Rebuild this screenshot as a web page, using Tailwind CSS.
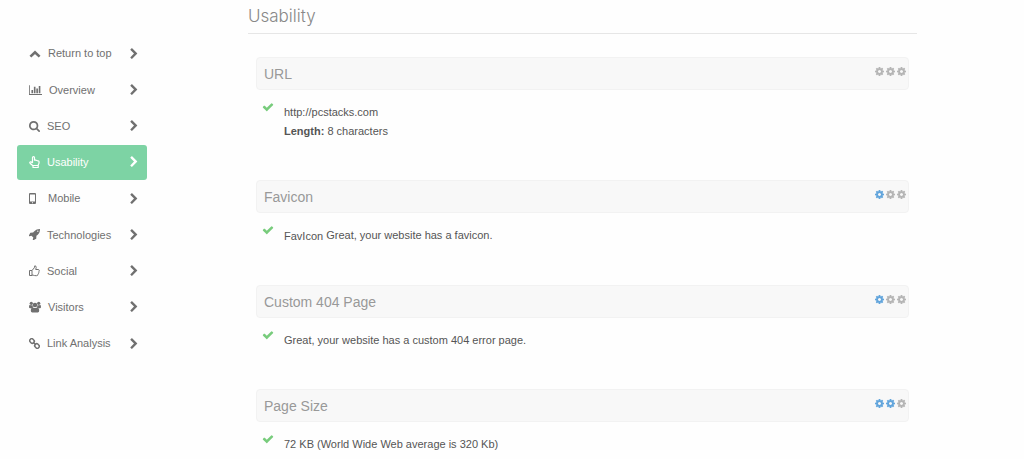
<!DOCTYPE html>
<html lang="en">
<head>
  <meta charset="utf-8"/>
  <meta content="width=device-width, initial-scale=1.0" name="viewport"/>
  <title>Website Review - Usability</title>
  <script src="https://cdn.jsdelivr.net/npm/@tailwindcss/browser@4"></script>
</head>
<body class="bg-[#fefefe] font-['Liberation_Sans',Arial,sans-serif] text-[11px] text-[#555]">
  <!-- shared icons -->
  <svg class="hidden">
    <symbol id="chevron" viewBox="0 0 1792 1792"><path d="M1363 877l-742 742q-19 19-45 19t-45-19l-166-166q-19-19-19-45t19-45l531-531-531-531q-19-19-19-45t19-45l166-166q19-19 45-19t45 19l742 742q19 19 19 45t-19 45z"/></symbol>
    <symbol id="check" viewBox="0 0 1792 1792"><path d="M1671 566q0 40-28 68l-724 724-136 136q-28 28-68 28t-68-28l-136-136-362-362q-28-28-28-68t28-68l136-136q28-28 68-28t68 28l294 295 656-657q28-28 68-28t68 28l136 136q28 28 28 68z"/></symbol>
    <symbol id="cog" viewBox="128 128 1536 1536"><path d="M1152 896q0-106-75-181t-181-75-181 75-75 181 75 181 181 75 181-75 75-181zm512-109v222q0 12-8 23t-20 13l-185 28q-19 54-39 91 35 50 107 138 10 12 10 25t-9 23q-27 37-99 108t-94 71q-12 0-26-9l-138-108q-44 23-91 38-16 136-29 186-7 28-36 28h-222q-14 0-24.5-8.5t-11.5-21.5l-28-184q-49-16-90-37l-141 107q-10 9-25 9-14 0-25-11-126-114-165-168-7-10-7-23 0-12 8-23 15-21 51-66.5t54-70.5q-27-50-41-99l-183-27q-13-2-21-12.5t-8-23.5v-222q0-12 8-23t19-13l186-28q14-46 39-92-40-57-107-138-10-12-10-24 0-10 9-23 26-36 98.5-107.5t94.5-71.5q13 0 26 10l138 107q44-23 91-38 16-136 29-186 7-28 36-28h222q14 0 24.5 8.5t11.5 21.5l28 184q49 16 90 37l142-107q9-9 24-9 13 0 25 10 129 119 165 170 7 8 7 22 0 12-8 23-15 21-51 66.5t-54 70.5q26 50 41 98l183 28q13 2 21 12.5t8 23.5z"/></symbol>
  </svg>
  <div class="flex">
    <aside class="w-[248px] shrink-0 pl-[17px] pt-9">
      <nav class="flex h-[325px] w-[130px] flex-col justify-between text-[#707070]">
        <a class="flex h-[35px] items-center rounded-[3px] pl-3 pr-[7px]" href="#top">
          <svg class="mr-[7px] h-3 w-3" viewBox="0 0 12 12" fill="none" stroke="currentColor" stroke-width="2.6"><path d="M1.4 8.6L6 4.2l4.6 4.4"/></svg>
          Return to top
          <svg class="ml-auto h-3 w-3" fill="currentColor"><use href="#chevron"/></svg>
        </a>
        <a class="flex h-[35px] items-center rounded-[3px] pl-3 pr-[7px]" href="#overview">
          <svg class="mr-[7px] h-3 w-[13px]" viewBox="0 0 2048 1792" fill="currentColor"><path d="M640 896v512h-256v-512h256zm384-512v1024h-256v-1024h256zm1024 1152v128h-2048v-1536h128v1408h1920zm-640-896v768h-256v-768h256zm384-384v1152h-256v-1152h256z"/></svg>
          Overview
          <svg class="ml-auto h-3 w-3" fill="currentColor"><use href="#chevron"/></svg>
        </a>
        <a class="flex h-[35px] items-center rounded-[3px] pl-3 pr-[7px]" href="#seo">
          <svg class="mr-[7px] h-[11px] w-[11px]" viewBox="64 128 1664 1664" fill="currentColor"><path d="M1216 832q0-185-131.500-316.500t-316.500-131.500-316.500 131.500-131.500 316.500 131.500 316.500 316.500 131.500 316.500-131.500 131.500-316.500zm512 832q0 52-38 90t-90 38q-54 0-90-38l-343-342q-179 124-399 124-143 0-273.500-55.500t-225-150-150-225-55.500-273.500 55.500-273.500 150-225 225-150 273.500-55.500 273.500 55.500 225 150 150 225 55.500 273.500q0 220-124 399l343 343q37 37 37 90z"/></svg>
          SEO
          <svg class="ml-auto h-3 w-3" fill="currentColor"><use href="#chevron"/></svg>
        </a>
        <a class="flex h-[35px] items-center rounded-[3px] bg-[#7dd3a4] pl-3 pr-[7px] text-white" href="#usability" aria-current="page">
          <svg class="mr-[7px] h-3 w-[11px]" viewBox="0 0 11 12" fill="none" stroke="currentColor" stroke-width="1.2" stroke-linejoin="round"><path d="M3.500 7V1.600a1 1 0 0 1 2 0v2.600q.8-.5 1.400.2.9-.4 1.400.4 1.800-.3 1.800 1.500 0 1.300-.9 2.700v2.500H4V9.800L1.200 7.500Q.2 6.200 1.500 5.900q.9-.1 2 1.100M4 9.500h5.200"/></svg>
          Usability
          <svg class="ml-auto h-3 w-3" fill="currentColor"><use href="#chevron"/></svg>
        </a>
        <a class="flex h-[35px] items-center rounded-[3px] pl-3 pr-[7px]" href="#mobile">
          <svg class="mr-3 h-3 w-[7px]" viewBox="0 0 7 12" fill="currentColor"><path fill-rule="evenodd" d="M1 0h5a1 1 0 0 1 1 1v9a1 1 0 0 1-1 1H1a1 1 0 0 1-1-1V1a1 1 0 0 1 1-1zM1 1.500v7h5v-7zM3 9.200v1h1v-1z"/></svg>
          Mobile
          <svg class="ml-auto h-3 w-3" fill="currentColor"><use href="#chevron"/></svg>
        </a>
        <a class="flex h-[35px] items-center rounded-[3px] pl-3 pr-[7px]" href="#technologies">
          <svg class="mr-[7px] h-[11px] w-[11px]" viewBox="64 128 1600 1600" fill="currentColor"><path d="M1440 448q0-40-28-68t-68-28-68 28-28 68 28 68 68 28 68-28 28-68zm224-288q0 249-75.500 430.500t-253.500 360.500q-81 80-195 176l-20 379q-2 16-16 26l-384 224q-7 4-16 4-12 0-23-9l-64-64q-13-14-8-32l85-276-281-281-276 85q-3 1-9 1-14 0-23-9l-64-64q-17-19-5-39l224-384q10-14 26-16l379-20q96-114 176-195 188-187 358-258t431-71q14 0 24 9.500t10 22.500z"/></svg>
          Technologies
          <svg class="ml-auto h-3 w-3" fill="currentColor"><use href="#chevron"/></svg>
        </a>
        <a class="flex h-[35px] items-center rounded-[3px] pl-3 pr-[7px]" href="#social">
          <svg class="mr-[7px] h-3 w-[11px]" viewBox="0 0 11 12" fill="none" stroke="currentColor" stroke-linejoin="round"><path d="M3 5.500H.5v5H3zM3 5.500l2.300-2.700.5-2q1.500 0 1.400 1.700L6.700 4.500h2.600q1 .2 1 1.100 0 .6-.4 1 .2.800-.4 1.400.1.800-.5 1.300 0 1.400-1.600 1.400-2 0-3.200-.5L3 10"/></svg>
          Social
          <svg class="ml-auto h-3 w-3" fill="currentColor"><use href="#chevron"/></svg>
        </a>
        <a class="flex h-[35px] items-center rounded-[3px] pl-3 pr-[7px]" href="#visitors">
          <svg class="mr-[7px] h-3 w-3" viewBox="0 0 12 12" fill="currentColor"><circle cx="2.300" cy="2.300" r="1.600"/><circle cx="9.700" cy="2.300" r="1.600"/><circle cx="6" cy="4" r="2.300"/><path d="M.8 3.700q1.400.9 2.600.4 0 1.500.9 2.200-1 0-1.600.9H1.100Q0 7.200 0 6 0 4.200.8 3.700zM11.200 3.700q-1.400.9-2.600.4 0 1.500-.9 2.200 1 0 1.600.9h1.600Q12 7.200 12 6q0-1.800-.8-2.300zM3.900 6.400Q6 7.800 8.100 6.400 10.200 6.700 10.200 9.800q0 1.700-1.500 1.700H3.300q-1.500 0-1.500-1.700 0-3.100 2.100-3.400z"/></svg>
          Visitors
          <svg class="ml-auto h-3 w-3" fill="currentColor"><use href="#chevron"/></svg>
        </a>
        <a class="flex h-[35px] items-center rounded-[3px] pl-3 pr-[7px]" href="#links">
          <svg class="mr-[7px] h-[11px] w-[11px]" viewBox="0 0 11 11" fill="none" stroke="currentColor" stroke-width="1.500"><rect x="-2.300" y="-1.900" width="4.600" height="3.800" rx="1.500" transform="translate(3 3) rotate(45)"/><rect x="-2.300" y="-1.900" width="4.600" height="3.800" rx="1.500" transform="translate(8 8) rotate(45)"/><path d="M4 4l3 3"/></svg>
          Link Analysis
          <svg class="ml-auto h-3 w-3" fill="currentColor"><use href="#chevron"/></svg>
        </a>
      </nav>
    </aside>
    <main class="mr-[107px] flex-1" id="usability">
      <h2 class="border-b border-[#e6e6e6] pb-1 pt-1 font-['Inter',sans-serif] text-[17px] leading-[25px] font-light text-[#888]">Usability</h2>
      <div class="px-2 pt-[23px]">
        <section class="pb-[39px]">
          <header class="flex h-[33px] justify-between rounded-[4px] border border-[#f2f2f2] bg-[#f8f8f8] pl-[7px] pr-[2px]">
            <h3 class="text-sm leading-8 text-[#999]">URL</h3>
            <div class="flex gap-[2px] pt-[9px] text-[#b5b5b5]">
              <svg class="h-[9px] w-[9px]" fill="currentColor"><use href="#cog"/></svg>
              <svg class="h-[9px] w-[9px]" fill="currentColor"><use href="#cog"/></svg>
              <svg class="h-[9px] w-[9px]" fill="currentColor"><use href="#cog"/></svg>
            </div>
          </header>
          <div class="flex items-start pl-[6px] pt-[11px]">
            <svg class="mr-[10px] h-3 w-3 text-[#78cc7c]" fill="currentColor"><use href="#check"/></svg>
            <p class="pt-[2px] leading-[19px]">http://pcstacks.com<br/><strong>Length:</strong> 8 characters</p>
          </div>
        </section>
        <section class="pb-[39px]">
          <header class="flex h-[33px] justify-between rounded-[4px] border border-[#f2f2f2] bg-[#f8f8f8] pl-[7px] pr-[2px]">
            <h3 class="text-sm leading-8 text-[#999]">Favicon</h3>
            <div class="flex gap-[2px] pt-[9px] text-[#b5b5b5]">
              <svg class="h-[9px] w-[9px] text-[#62a5dc]" fill="currentColor"><use href="#cog"/></svg>
              <svg class="h-[9px] w-[9px]" fill="currentColor"><use href="#cog"/></svg>
              <svg class="h-[9px] w-[9px]" fill="currentColor"><use href="#cog"/></svg>
            </div>
          </header>
          <div class="flex items-start pl-[6px] pt-[11px]">
            <svg class="mr-[10px] h-3 w-3 text-[#78cc7c]" fill="currentColor"><use href="#check"/></svg>
            <p class="pt-[2px] leading-[19px]"><span class="inline-block align-middle">FavIcon</span> Great, your website has a favicon.</p>
          </div>
        </section>
        <section class="pb-[39px]">
          <header class="flex h-[33px] justify-between rounded-[4px] border border-[#f2f2f2] bg-[#f8f8f8] pl-[7px] pr-[2px]">
            <h3 class="text-sm leading-8 text-[#999]">Custom 404 Page</h3>
            <div class="flex gap-[2px] pt-[9px] text-[#b5b5b5]">
              <svg class="h-[9px] w-[9px] text-[#62a5dc]" fill="currentColor"><use href="#cog"/></svg>
              <svg class="h-[9px] w-[9px]" fill="currentColor"><use href="#cog"/></svg>
              <svg class="h-[9px] w-[9px]" fill="currentColor"><use href="#cog"/></svg>
            </div>
          </header>
          <div class="flex items-start pl-[6px] pt-[11px]">
            <svg class="mr-[10px] h-3 w-3 text-[#78cc7c]" fill="currentColor"><use href="#check"/></svg>
            <p class="pt-[2px] leading-[19px]">Great, your website has a custom 404 error page.</p>
          </div>
        </section>
        <section>
          <header class="flex h-[33px] justify-between rounded-[4px] border border-[#f2f2f2] bg-[#f8f8f8] pl-[7px] pr-[2px]">
            <h3 class="text-sm leading-8 text-[#999]">Page Size</h3>
            <div class="flex gap-[2px] pt-[9px] text-[#b5b5b5]">
              <svg class="h-[9px] w-[9px] text-[#62a5dc]" fill="currentColor"><use href="#cog"/></svg>
              <svg class="h-[9px] w-[9px] text-[#62a5dc]" fill="currentColor"><use href="#cog"/></svg>
              <svg class="h-[9px] w-[9px]" fill="currentColor"><use href="#cog"/></svg>
            </div>
          </header>
          <div class="flex items-start pl-[6px] pt-[11px]">
            <svg class="mr-[10px] h-3 w-3 text-[#78cc7c]" fill="currentColor"><use href="#check"/></svg>
            <p class="pt-[2px] leading-[19px]">72 KB (World Wide Web average is 320 Kb)</p>
          </div>
        </section>
      </div>
    </main>
  </div>
</body>
</html>
